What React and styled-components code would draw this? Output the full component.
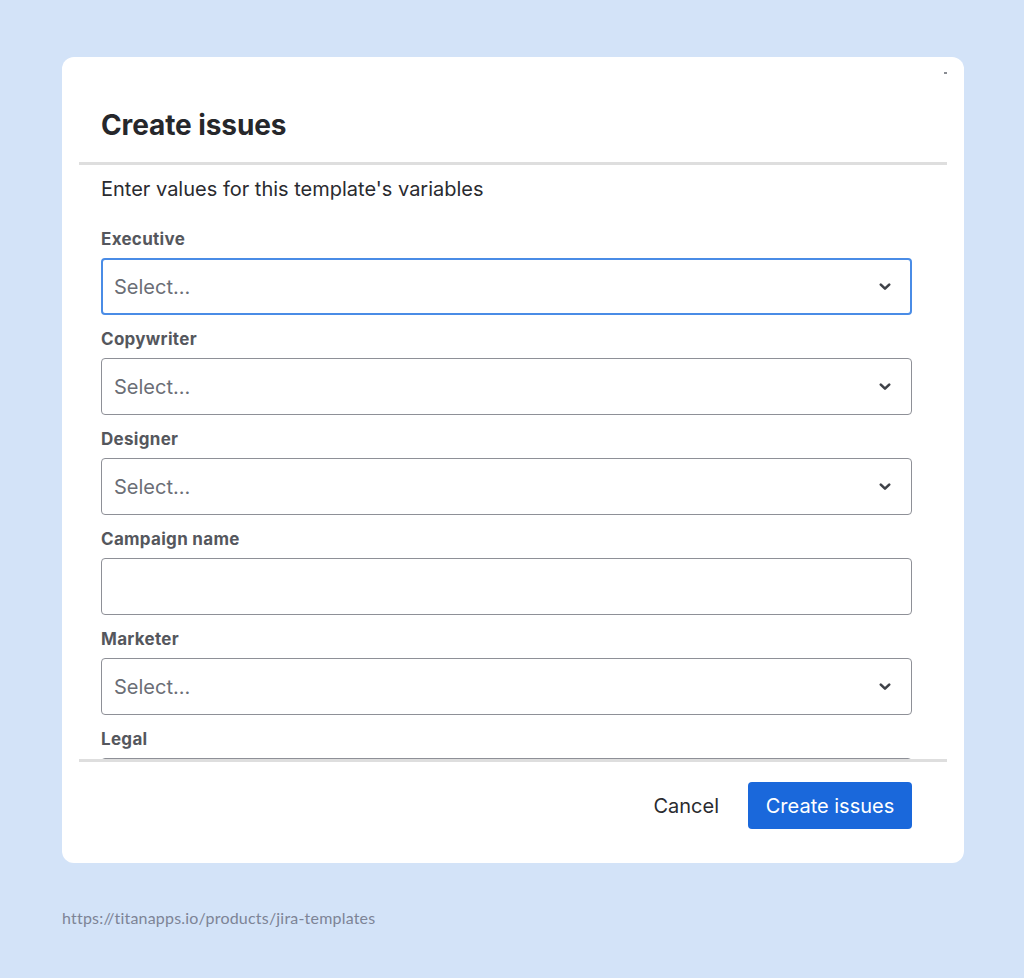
import React from "react";
import styled, { createGlobalStyle } from "styled-components";

const GlobalStyle = createGlobalStyle`
  body {
    margin: 0;
    background: #d3e3f8;
    font-family: Inter, "Noto Sans", "Liberation Sans", sans-serif;
  }
`;

const Page = styled.div`
  padding: 57px 60px 0 62px;
  min-height: 978px;
  box-sizing: border-box;
`;

const Dialog = styled.div`
  position: relative;
  width: 902px;
  height: 806px;
  background: #ffffff;
  border-radius: 12px;
  padding: 0 17px;
  box-sizing: border-box;
  display: flex;
  flex-direction: column;
`;

const CornerMark = styled.span`
  position: absolute;
  top: 15px;
  right: 17px;
  width: 3px;
  height: 2px;
  background: #8a8d93;
`;

const Header = styled.div`
  height: 108px;
  flex-shrink: 0;
  display: flex;
  align-items: flex-end;
  padding: 0 0 20px 22px;
  box-sizing: border-box;
  border-bottom: 3px solid #dedede;
`;

const Title = styled.h1`
  margin: 0;
  font-size: 28px;
  font-weight: 700;
  color: #26272b;
  letter-spacing: -0.1px;
`;

const Body = styled.div`
  height: 594px;
  flex-shrink: 0;
  overflow: hidden;
  padding: 12px 35px 0 22px;
  box-sizing: border-box;
`;

const Intro = styled.p`
  margin: 0 0 28px;
  font-size: 20px;
  line-height: 24px;
  color: #2a2b2f;
`;

const Field = styled.div`
  margin-bottom: 14px;
`;

const Label = styled.label`
  display: block;
  font-size: 17px;
  line-height: 20px;
  font-weight: 700;
  letter-spacing: 0.3px;
  color: #55575d;
  margin-bottom: 9px;
`;

const Control = styled.div`
  height: 57px;
  box-sizing: border-box;
  border-radius: 4px;
  border: ${(p) => (p.$focused ? "2px solid #4a8ce6" : "1px solid #8e9097")};
  padding: 0 ${(p) => (p.$focused ? "19px" : "20px")} 0
    ${(p) => (p.$focused ? "11px" : "12px")};
  display: flex;
  align-items: center;
  justify-content: space-between;
  background: #fff;
`;

const Placeholder = styled.span`
  font-size: 20px;
  color: #6b6e76;
`;

const Footer = styled.div`
  flex: 1;
  border-top: 3px solid #dedede;
  display: flex;
  justify-content: flex-end;
  align-items: flex-start;
  gap: 29px;
  padding: 20px 35px 0 0;
`;

const TextButton = styled.button`
  border: none;
  background: none;
  padding: 0;
  height: 47px;
  font-family: inherit;
  font-size: 20px;
  color: #2a2b2f;
  cursor: pointer;
`;

const PrimaryButton = styled.button`
  border: none;
  background: #1a68db;
  color: #fff;
  border-radius: 4px;
  width: 164px;
  height: 47px;
  font-family: inherit;
  font-size: 20px;
  cursor: pointer;
`;

const SourceLink = styled.div`
  margin-top: 45px;
  font-family: Lato, "Liberation Sans", sans-serif;
  font-size: 16px;
  color: #7d8496;
  letter-spacing: 0.2px;
`;

const Chevron = () => (
  <svg width="12" height="8" viewBox="0 0 12 8">
    <path
      d="M1.8 1.6 L6 5.6 L10.2 1.6"
      fill="none"
      stroke="#3f4248"
      strokeWidth="2.6"
      strokeLinecap="round"
      strokeLinejoin="round"
    />
  </svg>
);

const fields = [
  { label: "Executive", select: true, focused: true },
  { label: "Copywriter", select: true },
  { label: "Designer", select: true },
  { label: "Campaign name", select: false },
  { label: "Marketer", select: true },
  { label: "Legal", select: true },
];

export default function App() {
  return (
    <>
      <GlobalStyle />
      <Page>
        <Dialog>
          <CornerMark />
          <Header>
            <Title>Create issues</Title>
          </Header>
          <Body>
            <Intro>Enter values for this template's variables</Intro>
            {fields.map((f) => (
              <Field key={f.label}>
                <Label>{f.label}</Label>
                <Control $focused={f.focused}>
                  {f.select && <Placeholder>Select...</Placeholder>}
                  {f.select && <Chevron />}
                </Control>
              </Field>
            ))}
          </Body>
          <Footer>
            <TextButton>Cancel</TextButton>
            <PrimaryButton>Create issues</PrimaryButton>
          </Footer>
        </Dialog>
        <SourceLink>https://titanapps.io/products/jira-templates</SourceLink>
      </Page>
    </>
  );
}
